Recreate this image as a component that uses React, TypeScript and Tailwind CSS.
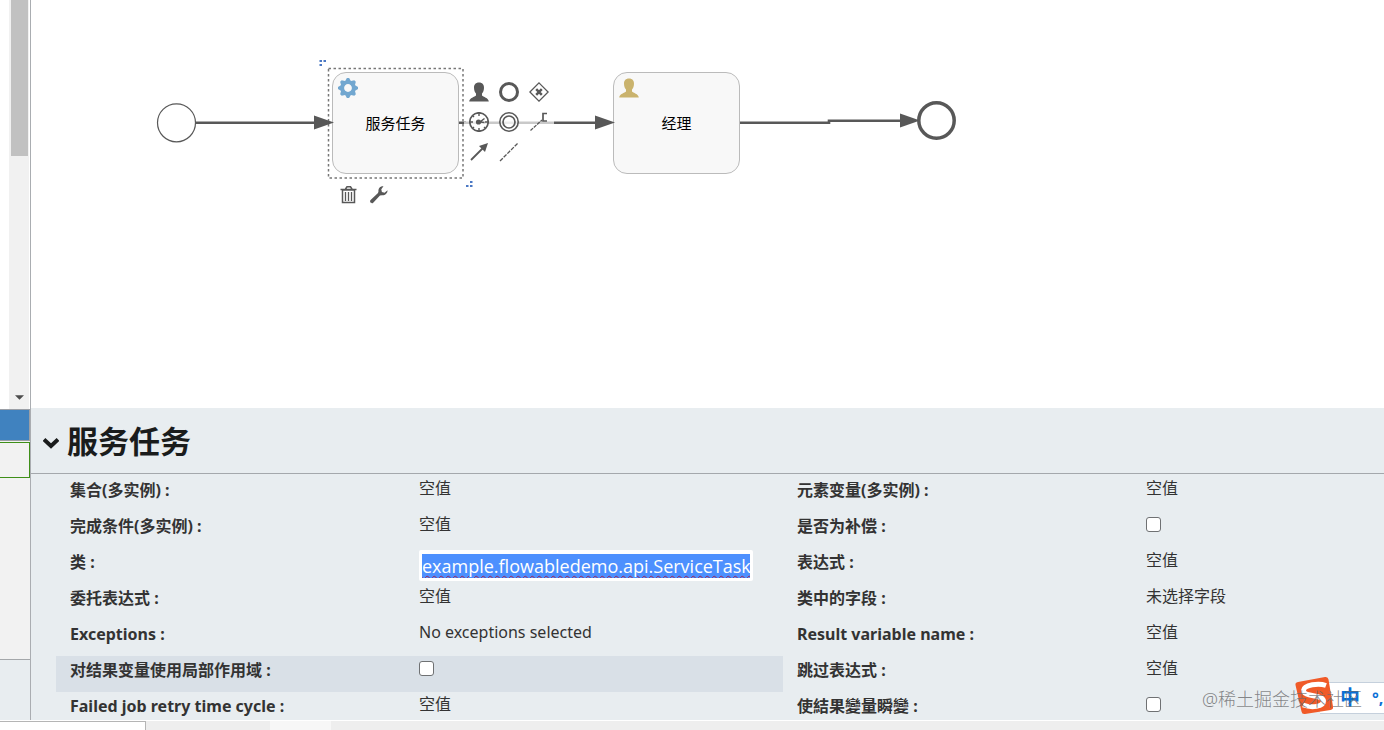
import type { ReactNode } from "react";

type Field = {
  id: string;
  label: string;
  kind?: "text" | "check" | "input";
  value?: string;
  active?: boolean;
};

const leftFields: Field[] = [
  { id: "collection", label: "集合(多实例)", value: "空值" },
  { id: "completion", label: "完成条件(多实例)", value: "空值" },
  { id: "class", label: "类", kind: "input", value: "example.flowabledemo.api.ServiceTask" },
  { id: "delegate", label: "委托表达式", value: "空值" },
  { id: "exceptions", label: "Exceptions", value: "No exceptions selected" },
  { id: "local-scope", label: "对结果变量使用局部作用域", kind: "check", active: true },
  { id: "retry", label: "Failed job retry time cycle", value: "空值" },
];

const rightFields: Field[] = [
  { id: "element", label: "元素变量(多实例)", value: "空值" },
  { id: "compensation", label: "是否为补偿", kind: "check" },
  { id: "expression", label: "表达式", value: "空值" },
  { id: "class-fields", label: "类中的字段", value: "未选择字段" },
  { id: "result", label: "Result variable name", value: "空值" },
  { id: "skip", label: "跳过表达式", value: "空值" },
  { id: "transient", label: "使結果變量瞬變", kind: "check" },
];

function FieldRow({ field }: { field: Field }) {
  return (
    <div className={field.active ? "flex h-9 bg-[#d9e0e7] pl-3.5" : "flex h-9 pl-3.5"}>
      <label htmlFor={field.id} className="w-[349px] shrink-0 pt-0.5 leading-6 font-bold">
        {field.label} :
      </label>
      {field.kind === "check" && (
        <div className="pt-[5px]">
          <input
            id={field.id}
            type="checkbox"
            className="block size-[15px] appearance-none rounded-[3px] border border-[#6f7173] bg-white checked:bg-[#2f6fc4]"
          />
        </div>
      )}
      {field.kind === "input" && (
        <div className="mt-0.5 flex h-[31px] items-center rounded-[2px] bg-white px-[3px]">
          <input
            id={field.id}
            defaultValue={field.value}
            className="h-6 w-[328px] bg-[#4d90fe] font-['Open_Sans',sans-serif] text-[18px] leading-6 text-white underline decoration-[#a02456] decoration-wavy decoration-1 underline-offset-2 outline-none"
          />
        </div>
      )}
      {!field.kind && (
        <output id={field.id} className="leading-6">
          {field.value}
        </output>
      )}
    </div>
  );
}

function PersonShape() {
  return (
    <path d="M10 0.5c3.4 0 5 2.100 5 5.200 0 2.700-.9 4.500-2 5.700v2.100c1.200 1.500 6.500 2.200 6.800 6H.2c.3-3.800 5.600-4.500 6.800-6v-2.100c-1.100-1.200-2-3-2-5.700C5 2.600 6.600.5 10 .5z" />
  );
}

function Icon({ children }: { children: ReactNode }) {
  return (
    <svg viewBox="0 0 20 20" className="size-5" fill="none" stroke="#585858" aria-hidden="true">
      {children}
    </svg>
  );
}

const padIcons: { name: string; art: ReactNode }[] = [
  { name: "User task", art: <g fill="#585858" stroke="none"><PersonShape /></g> },
  { name: "End event", art: <circle cx="10" cy="10" r="8.500" strokeWidth="3" /> },
  {
    name: "Exclusive gateway",
    art: (
      <>
        <path d="M10 .9 19.100 10 10 19.100.9 10z" strokeWidth="1.300" />
        <path d="m7.200 7.200 5.600 5.600m0-5.600-5.600 5.600" strokeWidth="2.500" />
      </>
    ),
  },
  {
    name: "Timer event",
    art: (
      <>
        <circle cx="10" cy="10" r="9.200" fill="#fff" fillOpacity=".65" strokeWidth="1.700" />
        <path d="M10 1v3M10 16v3M1 10h3M16 10h3M3.700 3.700l1.300 1.300M15 15l1.300 1.300M3.700 16.300 5 15" strokeWidth="1.400" />
        <path d="m15.500 6.500-4.500 3.500 4.500.5" strokeWidth="1.500" />
        <circle cx="9.500" cy="10" r="2.600" fill="#585858" stroke="none" />
      </>
    ),
  },
  {
    name: "Intermediate event",
    art: (
      <>
        <circle cx="10" cy="10" r="9.200" fill="#fff" fillOpacity=".65" strokeWidth="1.600" />
        <circle cx="10" cy="10" r="6" strokeWidth="1.700" />
      </>
    ),
  },
  {
    name: "Text annotation",
    art: (
      <>
        <path d="M1.500 18.500 13 8" strokeWidth="1.300" strokeDasharray="3.500 1" />
        <path d="M18 1.500h-4v7.500h4" strokeWidth="1.700" />
      </>
    ),
  },
  {
    name: "Sequence flow",
    art: (
      <>
        <path d="M2 18 14 6" strokeWidth="1.800" />
        <path d="m19 1-3 9-6-6z" fill="#585858" stroke="none" />
      </>
    ),
  },
  { name: "Association", art: <path d="M1 19 19 1" strokeWidth="1.300" strokeDasharray="4 1.200" /> },
];

function Gear() {
  return (
    <svg viewBox="-10 -10 20 20" className="size-5" aria-hidden="true">
      <g fill="#72a7d0">
        {[0, 45, 90, 135, 180, 225, 270, 315].map((angle) => (
          <path key={angle} d="M-3.400-6-1.100-10h2.200L3.400-6z" transform={`rotate(${angle})`} />
        ))}
      </g>
      <circle r="5.700" fill="none" stroke="#72a7d0" strokeWidth="3.600" />
    </svg>
  );
}

function Diagram() {
  return (
    <main className="relative h-[408px] shrink-0 overflow-hidden bg-white font-['Liberation_Sans','Noto_Sans_CJK_SC',sans-serif]">
      <svg className="absolute top-0 left-0 h-[408px] w-[1000px]" viewBox="31 0 1000 408" fill="none" stroke="#585858" aria-hidden="true">
        <circle cx="176.500" cy="122.800" r="19" strokeWidth="1.200" />
        <path d="M196 122.800h120M458 122.800h8M554 122.800h42M740 122.800h89v-2h72" strokeWidth="2.600" />
        <path d="M464 122.800h90" stroke="#c9c9c9" strokeWidth="2.400" />
        <path d="M900 113.500l20 7-20 7z" fill="#585858" stroke="none" />
        <circle cx="936.500" cy="120.500" r="17.700" strokeWidth="3.500" />
        <path d="M328.500 68.500h134.500v109.500h-134.500z" stroke="#777" strokeDasharray="2.500 2.500" strokeWidth="1.500" />
        <path d="M319.500 60h2.500v2h-2.500zM323.500 60h2.500v2h-2.500zM319.500 64h2.500v2h-2.500zM470 181h2.500v2h-2.500zM466 185h2.500v2h-2.500zM470 185h2.500v2h-2.500z" fill="#4b78c4" stroke="none" />
      </svg>

      <div className="absolute top-[72px] left-[301px] flex h-[102px] w-[127px] items-center justify-center rounded-[14px] border border-[#bbb] bg-[#f8f8f8] pt-0.5 text-[15px] text-black">
        <span className="absolute top-[5px] left-[5px]"><Gear /></span>
        服务任务
      </div>
      <div className="absolute top-[72px] left-[582px] flex h-[102px] w-[127px] items-center justify-center rounded-[14px] border border-[#bbb] bg-[#f8f8f8] pt-0.5 text-[15px] text-black">
        <svg viewBox="0 0 20 20" className="absolute top-[5px] left-[5px] size-5" fill="#cab36d" aria-hidden="true">
          <PersonShape />
        </svg>
        经理
      </div>
      <svg className="absolute top-[115px] left-[283px] h-[15px] w-[301px]" viewBox="0 0 301 15" aria-hidden="true">
        <path d="m0 .5 20 7-20 7zM281 .5l20 7-20 7z" fill="#585858" />
      </svg>
      <div className="absolute top-[82px] left-[438px] grid grid-cols-3 gap-2.5">
        {padIcons.map((item) => (
          <button key={item.name} type="button" aria-label={item.name} className="size-5">
            <Icon>{item.art}</Icon>
          </button>
        ))}
      </div>

      <div className="absolute top-[185px] left-[308px] flex gap-2.5">
        <button type="button" aria-label="Delete" className="size-5">
          <Icon>
            <path d="M3.500 5h12v12.500h-12zM1.500 4.500h16M6.500 4 8 1.800h3.500L13 4" strokeWidth="1.500" />
            <path d="M6.500 7v9M9.500 7v9M12.500 7v9" strokeWidth="1.300" />
          </Icon>
        </button>
        <button type="button" aria-label="Change type" className="size-5">
          <Icon>
            <path
              d="M14.500 1.200c-3-.4-5.500 2-5 5.100L9 8 1.600 15c-1.600 1.700.9 4.300 2.600 2.700L11 10.600l2-.4c3.200.2 5.700-2 5.500-5l-2.900 2.500-2.700-.8-.6-2.700z"
              fill="#585858"
              stroke="none"
            />
          </Icon>
        </button>
      </div>
    </main>
  );
}

function Sidebar() {
  return (
    <aside className="flex w-[31px] shrink-0 flex-col border-r border-[#aaadb1] bg-[#f2f2f2]">
      <div className="flex h-[409px] shrink-0 justify-end bg-white pr-px">
        <div className="flex w-5 flex-col items-center justify-between bg-[#f1f1f1]">
          <div className="h-[156px] w-[17px] bg-[#c1c1c1]" />
          <svg viewBox="0 0 10 5" className="mb-[9px] h-[5px] w-[9px]" aria-hidden="true">
            <path d="M0 0h10L5 5z" fill="#4d4d4d" />
          </svg>
        </div>
      </div>
      <div className="h-8 shrink-0 border border-l-0 border-[#9b9fa6] bg-[#4082bf]" />
      <div className="mt-px h-9 shrink-0 border border-l-0 border-[#3f8f18] bg-[#f2f2f2]" />
      <div className="h-[182px] shrink-0 border-b border-[#a4a7aa]" />
      <div className="flex-1 bg-[#e8edf0]" />
    </aside>
  );
}

export default function App() {
  return (
    <div className="relative flex h-screen flex-col overflow-hidden bg-white font-['Noto_Sans','Noto_Sans_CJK_SC',sans-serif] text-base text-[#333]">
      <div className="flex min-h-0 flex-1">
        <Sidebar />
        <div className="flex min-w-0 flex-1 flex-col">
          <Diagram />
          <section className="flex min-h-0 flex-1 flex-col overflow-hidden bg-[#e8edf0]">
            <header className="flex h-[66px] shrink-0 items-center gap-2 border-b border-[#a4a8ac] pl-3 text-[#1a1c1c]">
              <svg viewBox="0 0 16 12" className="mt-1 h-3 w-4" fill="none" stroke="currentColor" strokeWidth="4" aria-hidden="true">
                <path d="m1 2.500 7 6.500 7-6.500" />
              </svg>
              <h1 className="text-[31px] leading-10 font-bold">服务任务</h1>
            </header>
            <div className="ml-[25px] grid grid-cols-[727fr_601fr] pt-0.5">
              <div>{leftFields.map((f) => <FieldRow key={f.id} field={f} />)}</div>
              <div>{rightFields.map((f) => <FieldRow key={f.id} field={f} />)}</div>
            </div>
          </section>
        </div>
      </div>
      <footer className="flex h-2.5 shrink-0 border-t border-white bg-[#eee]">
        <div className="w-[146px] border-t border-r border-[#b5b5b5] bg-white" />
        <div className="ml-[124px] w-[61px] bg-[#f7f7f7]" />
      </footer>

      <div className="absolute right-0 bottom-4 flex h-8 w-[64px] items-center gap-3 border-y border-[#c5d0dc] bg-white pl-5 text-[20px] leading-6 font-bold text-[#0a6fd6]">
        中
        <span className="text-base">°,</span>
      </div>
      <svg viewBox="0 0 40 40" className="absolute right-[50px] bottom-[14px] size-10" aria-hidden="true">
        <path d="M4 6 31 1q3-.5 3.500 2.500l4.500 27q.5 3-2.500 3.500L11 38q-3 .5-3.500-2.500L1.500 9q-.5-2.500 2.500-3z" fill="#f05a28" />
        <path d="M32 9.500c-7-2.500-22-1-22.500 5-.5 6.500 20 4 20 10.500 0 6-12 7-20.500 4" fill="none" stroke="#fff" strokeWidth="5" />
      </svg>
      <div className="absolute right-[22px] bottom-[19px] text-[18px] leading-6 font-light text-[#68696b]/80">@稀土掘金技术社区</div>
    </div>
  );
}
